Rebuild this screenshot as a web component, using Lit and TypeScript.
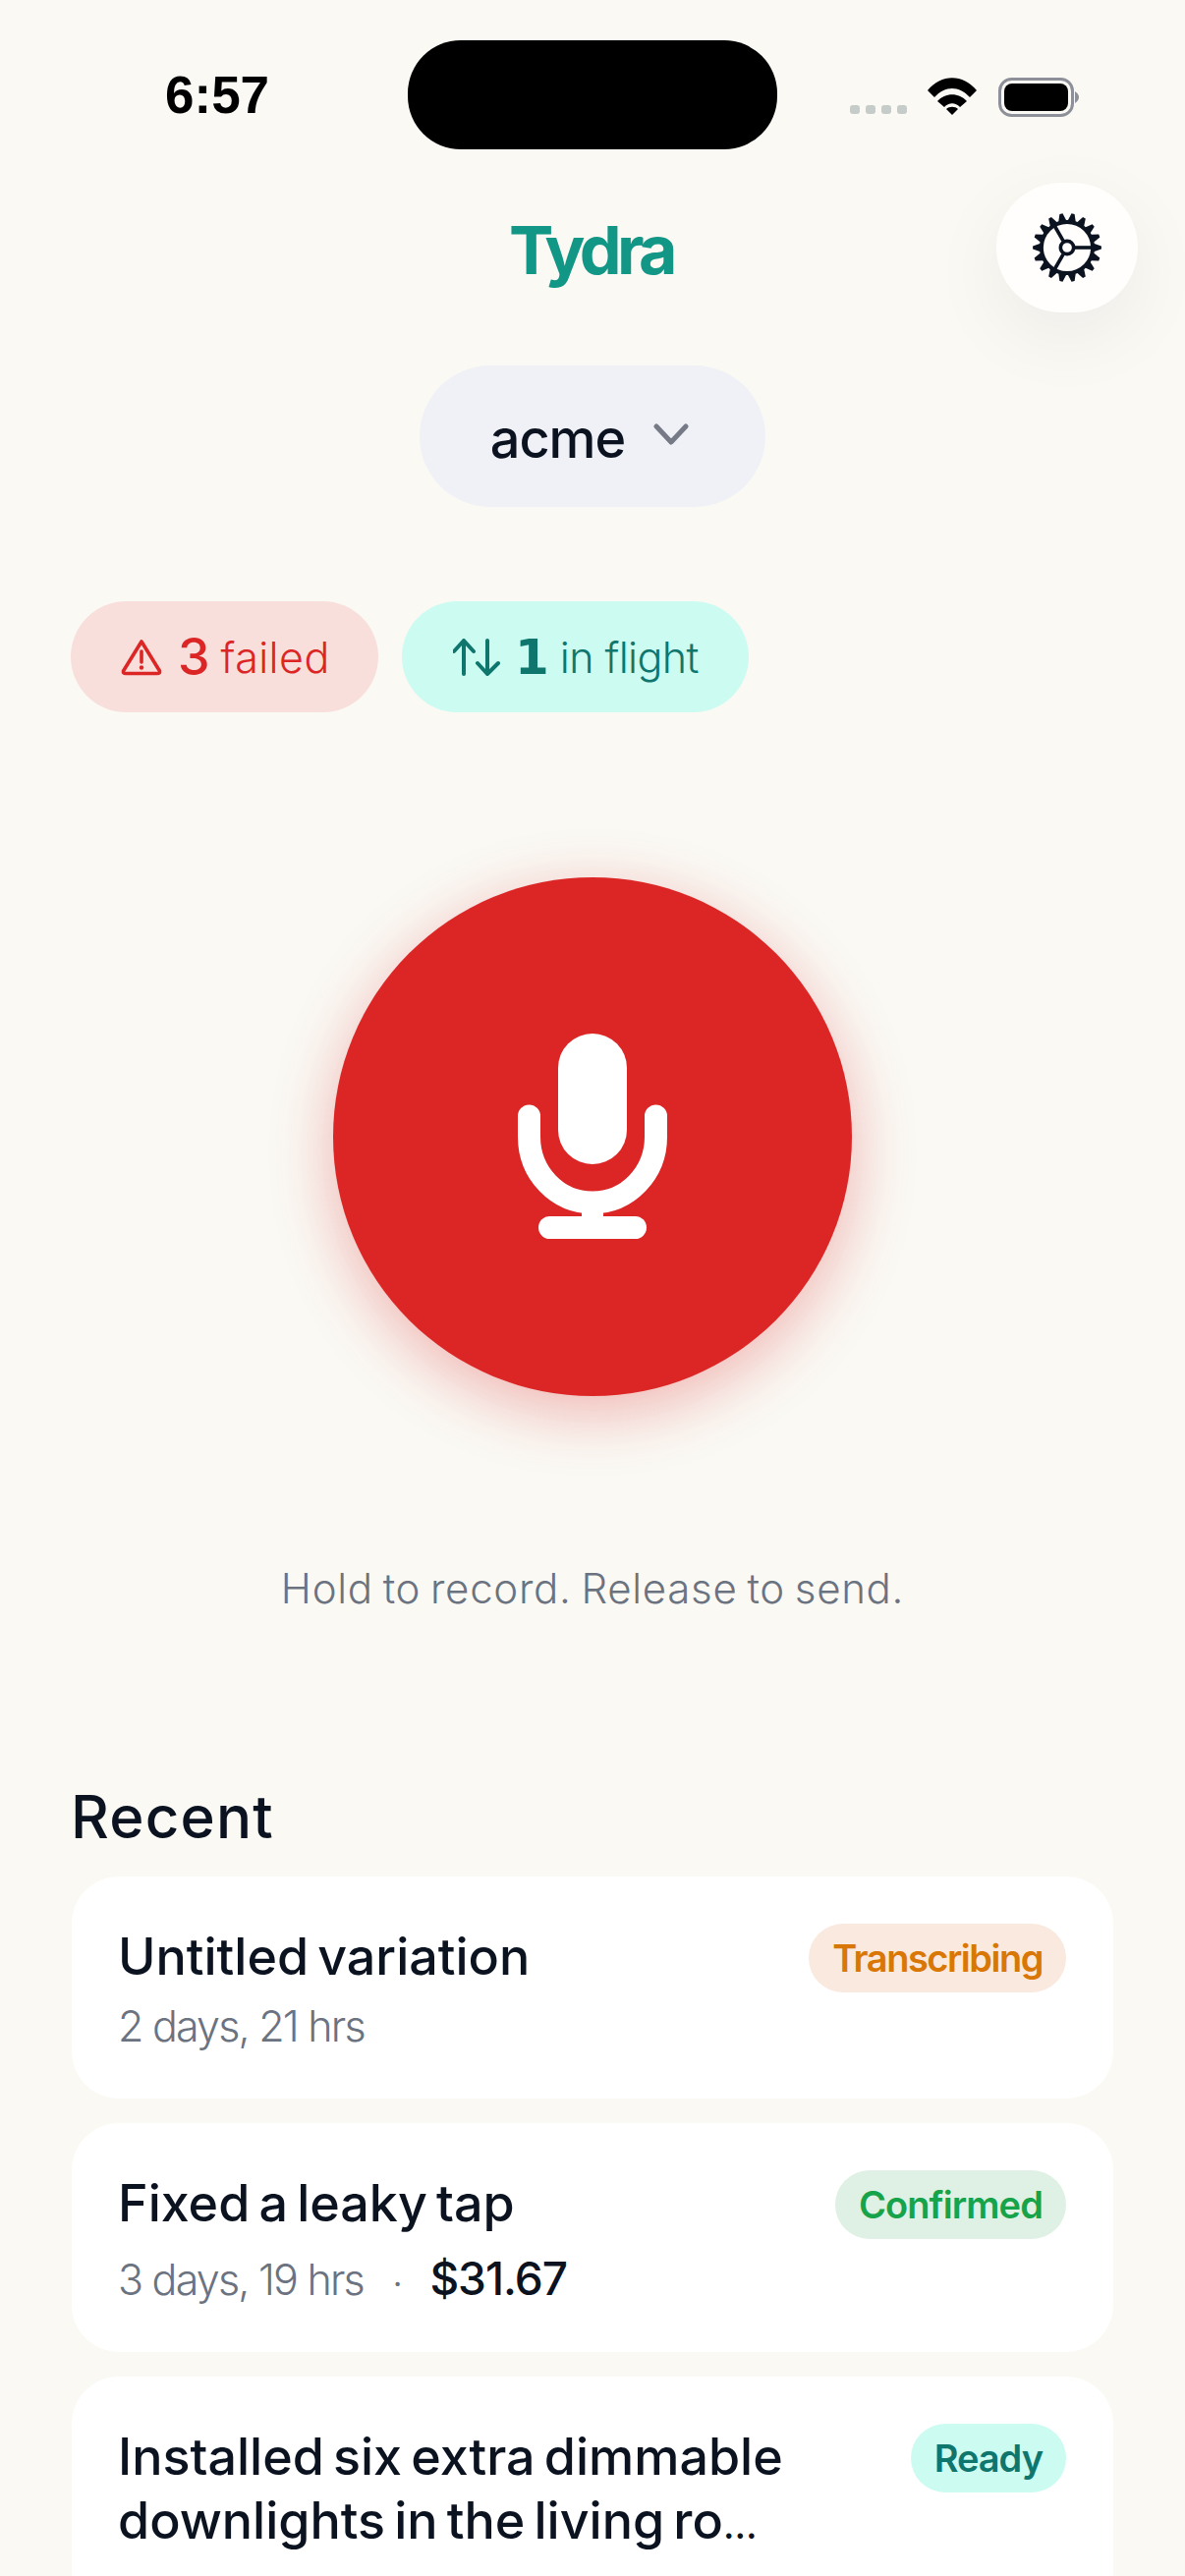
import { LitElement, html, css, svg } from "lit";
import { customElement } from "lit/decorators.js";

function gearPath(): string {
  const pts: string[] = [];
  const n = 18;
  for (let i = 0; i < n; i++) {
    const c = ((i * 20 + 10) * Math.PI) / 180;
    const p = (r: number, a: number) =>
      `${(50 + r * Math.sin(c + a)).toFixed(2)} ${(50 - r * Math.cos(c + a)).toFixed(2)}`;
    const w = (5.4 * Math.PI) / 180;
    const t = (2.6 * Math.PI) / 180;
    pts.push(`${i === 0 ? "M" : "L"}${p(39, -w - t)}`);
    pts.push(`L${p(48.5, -t)}`);
    pts.push(`L${p(48.5, t)}`);
    pts.push(`L${p(39, w + t)}`);
  }
  return pts.join(" ") + " Z";
}

@customElement("app-root")
export class AppRoot extends LitElement {
  static styles = css`
    :host {
      display: block;
      width: 1206px;
      height: 2622px;
      overflow: hidden;
      background: #faf9f4;
      color: #0b1220;
      font-family: Inter, "Liberation Sans", sans-serif;
    }
    .status {
      display: grid;
      grid-template-columns: 415px 376px 1fr;
      height: 111px;
      padding-top: 41px;
    }
    .time {
      padding: 25px 0 0 168px;
      font-size: 53px;
      line-height: 62px;
      color: #000;
      font-family: "Liberation Sans", sans-serif;
      font-weight: 700;
      height: 62px;
    }
    .island {
      background: #000;
      border-radius: 54px;
      height: 111px;
    }
    .status-icons {
      display: flex;
      align-items: flex-start;
      padding: 38px 0 0 74px;
    }
    .dots {
      display: flex;
      gap: 6px;
      margin: 28px 21px 0 0;
    }
    .dots i {
      display: block;
      width: 10px;
      height: 9px;
      border-radius: 3px;
      background: #c5ccca;
    }
    .wifi {
      width: 50px;
      height: 38px;
      margin-right: 22px;
    }
    .batt {
      width: 82px;
      height: 40px;
    }

    .top {
      position: relative;
      height: 132px;
      margin-top: 34px;
      display: flex;
      align-items: center;
      justify-content: center;
    }
    .brand {
      font-size: 68px;
      font-weight: 700;
      letter-spacing: -4.6px;
      color: #129685;
      line-height: 80px;
      margin: 3px 3px 0 0;
    }
    .gear-btn {
      position: absolute;
      left: 1014px;
      top: 0;
      width: 144px;
      height: 132px;
      border-radius: 66px;
      background: #fffefc;
      box-shadow: 0 24px 80px rgba(15, 20, 40, 0.06);
      display: flex;
      align-items: center;
      justify-content: center;
    }
    .gear {
      width: 72px;
      height: 72px;
      color: #0b1220;
    }

    .picker-wrap {
      display: flex;
      justify-content: center;
      margin-top: 54px;
    }
    .picker {
      display: flex;
      align-items: center;
      justify-content: center;
      gap: 29px;
      width: 352px;
      height: 144px;
      border-radius: 72px;
      background: #eff1f6;
      font-size: 54px;
      font-weight: 500;
    }
    .picker span {
      letter-spacing: -1px;
      margin-top: 4px;
    }
    .chev {
      width: 36px;
      height: 22px;
      margin: -4px 6px 0 0;
    }

    .chips {
      display: flex;
      gap: 24px;
      margin-top: 96px;
      padding-left: 72px;
    }
    .chip {
      display: flex;
      align-items: center;
      height: 113px;
      border-radius: 57px;
      box-sizing: border-box;
      font-size: 43px;
      font-weight: 400;
    }
    .chip.fail {
      width: 313px;
      padding-left: 51px;
      background: #f8dfdc;
      color: #dc2626;
    }
    .chip.flight {
      width: 353px;
      padding-left: 52px;
      background: #ccfbf1;
      color: #0f766e;
    }
    .chip svg {
      flex: none;
    }
    .warn {
      width: 42px;
      height: 38px;
      margin-right: 16px;
    }
    .arrows {
      width: 48px;
      height: 38px;
      margin-right: 15px;
    }
    .num {
      font-size: 52px;
      font-weight: 500;
      margin-right: 11px;
    }
    .flight .num {
      font-family: "DejaVu Sans", sans-serif;
      font-weight: 700;
      font-size: 50px;
    }
    .lbl {
      letter-spacing: 0.4px;
      font-weight: 300;
    }
    .flight .lbl {
      letter-spacing: -0.6px;
    }

    .mic-wrap {
      display: flex;
      justify-content: center;
      margin-top: 168px;
    }
    .mic {
      width: 528px;
      height: 528px;
      border-radius: 50%;
      background: #dc2626;
      box-shadow: 0 16px 64px rgba(220, 38, 38, 0.33);
      display: flex;
      align-items: center;
      justify-content: center;
    }
    .mic svg {
      width: 152px;
      height: 210px;
    }

    .hint {
      margin-top: 168px;
      text-align: center;
      font-size: 42px;
      line-height: 56px;
      color: #6b7280;
      letter-spacing: 0.7px;
      word-spacing: -2.6px;
      font-weight: 300;
    }

    .recent {
      margin: 168px 0 0 72px;
      font-size: 60px;
      line-height: 72px;
      font-weight: 500;
      letter-spacing: 1.2px;
    }
    .list {
      display: flex;
      flex-direction: column;
      gap: 25px;
      margin: 25px 73px 0;
    }
    .card {
      background: #fff;
      border-radius: 48px;
      padding: 48px 48px 47px;
      display: flex;
      justify-content: space-between;
      align-items: flex-start;
      gap: 24px;
    }
    .body {
      margin-left: -1px;
      padding-top: 1px;
    }
    .title {
      font-size: 52px;
      line-height: 65px;
      font-weight: 500;
      letter-spacing: 0;
      word-spacing: -4.7px;
    }
    .ell {
      font-size: 38px;
    }
    .meta {
      display: flex;
      align-items: baseline;
      margin-top: 12px;
      font-size: 43px;
      line-height: 53px;
      color: #6b7280;
      letter-spacing: -1.8px;
      font-weight: 300;
    }
    .sep {
      margin: 0 30px;
      font-size: 32px;
      line-height: 32px;
      font-weight: 400;
    }
    .price {
      color: #0b1220;
      font-weight: 500;
      font-size: 46px;
      line-height: 56px;
      padding-top: 4px;
      letter-spacing: -1px;
    }
    .badge {
      flex: none;
      height: 70px;
      border-radius: 35px;
      display: flex;
      align-items: center;
      padding: 0 24px;
      font-size: 38px;
      font-weight: 600;
    }
    .badge.orange {
      background: #fae9df;
      color: #d97706;
      letter-spacing: -1.5px;
    }
    .badge.green {
      background: #dff0e4;
      color: #16a34a;
      letter-spacing: -0.9px;
    }
    .badge.teal {
      background: #ccfbf1;
      color: #0f766e;
      letter-spacing: -1px;
    }
  `;

  private card(title: unknown, meta: string, price: string, badge: string, tone: string) {
    return html`<div class="card">
      <div class="body">
        <div class="title">${title}</div>
        <div class="meta">
          <span>${meta}</span>
          ${price ? html`<span class="sep">·</span><span class="price">${price}</span>` : ""}
        </div>
      </div>
      <div class="badge ${tone}">${badge}</div>
    </div>`;
  }

  render() {
    return html`
      <div class="status">
        <div class="time">6:57</div>
        <div class="island"></div>
        <div class="status-icons">
          <div class="dots"><i></i><i></i><i></i><i></i></div>
          <svg class="wifi" viewBox="0 0 50 38">
            <path d="M0 13 C14 -4 36 -4 50 13 L43 20 C32 8 18 8 7 20 Z" fill="#000" />
            <path d="M10 24 C18 15 32 15 40 24 L33 30 C28 25 22 25 17 30 Z" fill="#000" />
            <path d="M19 32 C22 29 28 29 31 32 L25 38 Z" fill="#000" />
          </svg>
          <svg class="batt" viewBox="0 0 82 40">
            <rect x="1.500" y="1.500" width="74" height="37" rx="12" fill="none" stroke="#8e9099" stroke-width="3" />
            <rect x="6" y="6" width="65" height="28" rx="8" fill="#000" />
            <path d="M78 14 C81 16 82 18 82 20 C82 22 81 24 78 26 Z" fill="#8e9099" />
          </svg>
        </div>
      </div>

      <div class="top">
        <div class="brand">Tydra</div>
        <div class="gear-btn">
          <svg class="gear" viewBox="0 0 100 100">
            <path d=${gearPath()} fill="currentColor" />
            <circle cx="50" cy="50" r="33.500" fill="#fffefc" />
            ${svg`<g stroke="currentColor" stroke-width="5" fill="none">
              <line x1="61" y1="50" x2="88" y2="50" />
              <line x1="44.500" y1="40.500" x2="31" y2="17" />
              <line x1="44.500" y1="59.500" x2="31" y2="83" />
              <circle cx="50" cy="50" r="9.250" />
            </g>`}
          </svg>
        </div>
      </div>

      <div class="picker-wrap">
        <div class="picker">
          <span>acme</span>
          <svg class="chev" viewBox="0 0 36 22">
            <path d="M3 3 L18 19 L33 3" fill="none" stroke="#767a86" stroke-width="5" stroke-linecap="round" stroke-linejoin="round" />
          </svg>
        </div>
      </div>

      <div class="chips">
        <div class="chip fail">
          <svg class="warn" viewBox="0 0 42 38">
            <path d="M21 3 L39.500 33 Q40 35.500 37 35.500 H5 Q2 35.500 2.500 33 Z" fill="none" stroke="currentColor" stroke-width="3.600" stroke-linejoin="round" />
            <path d="M21 13 V24" stroke="currentColor" stroke-width="3.600" stroke-linecap="round" />
            <circle cx="21" cy="29.500" r="2.200" fill="currentColor" />
          </svg>
          <span class="num">3</span><span class="lbl">failed</span>
        </div>
        <div class="chip flight">
          <svg class="arrows" viewBox="0 0 48 38">
            <path d="M11 36 V3 M1 13 L11 2 L21 13" fill="none" stroke="currentColor" stroke-width="4" stroke-linecap="round" stroke-linejoin="round" />
            <path d="M35 2 V35 M25 25 L35 36 L46 25" fill="none" stroke="currentColor" stroke-width="4" stroke-linecap="round" stroke-linejoin="round" />
          </svg>
          <span class="num">1</span><span class="lbl">in flight</span>
        </div>
      </div>

      <div class="mic-wrap">
        <div class="mic">
          <svg viewBox="0 0 152 210">
            <rect x="41" y="0" width="70" height="133" rx="35" fill="#fff" />
            <path d="M11.500 84 V105 C11.500 142 40 172 76 172 C112 172 140.500 142 140.500 105 V84" fill="none" stroke="#fff" stroke-width="23" stroke-linecap="round" />
            <rect x="65" y="170" width="22" height="24" fill="#fff" />
            <rect x="21" y="186" width="110" height="23" rx="11.500" fill="#fff" />
          </svg>
        </div>
      </div>

      <div class="hint">Hold to record. Release to send.</div>

      <div class="recent">Recent</div>
      <div class="list">
        ${this.card("Untitled variation", "2 days, 21 hrs", "", "Transcribing", "orange")}
        ${this.card("Fixed a leaky tap", "3 days, 19 hrs", "$31.67", "Confirmed", "green")}
        ${this.card(
          html`Installed six extra dimmable<br />downlights in the living ro<span class="ell">…</span>`,
          "3 days, 20 hrs",
          "$",
          "Ready",
          "teal"
        )}
      </div>
    `;
  }
}
